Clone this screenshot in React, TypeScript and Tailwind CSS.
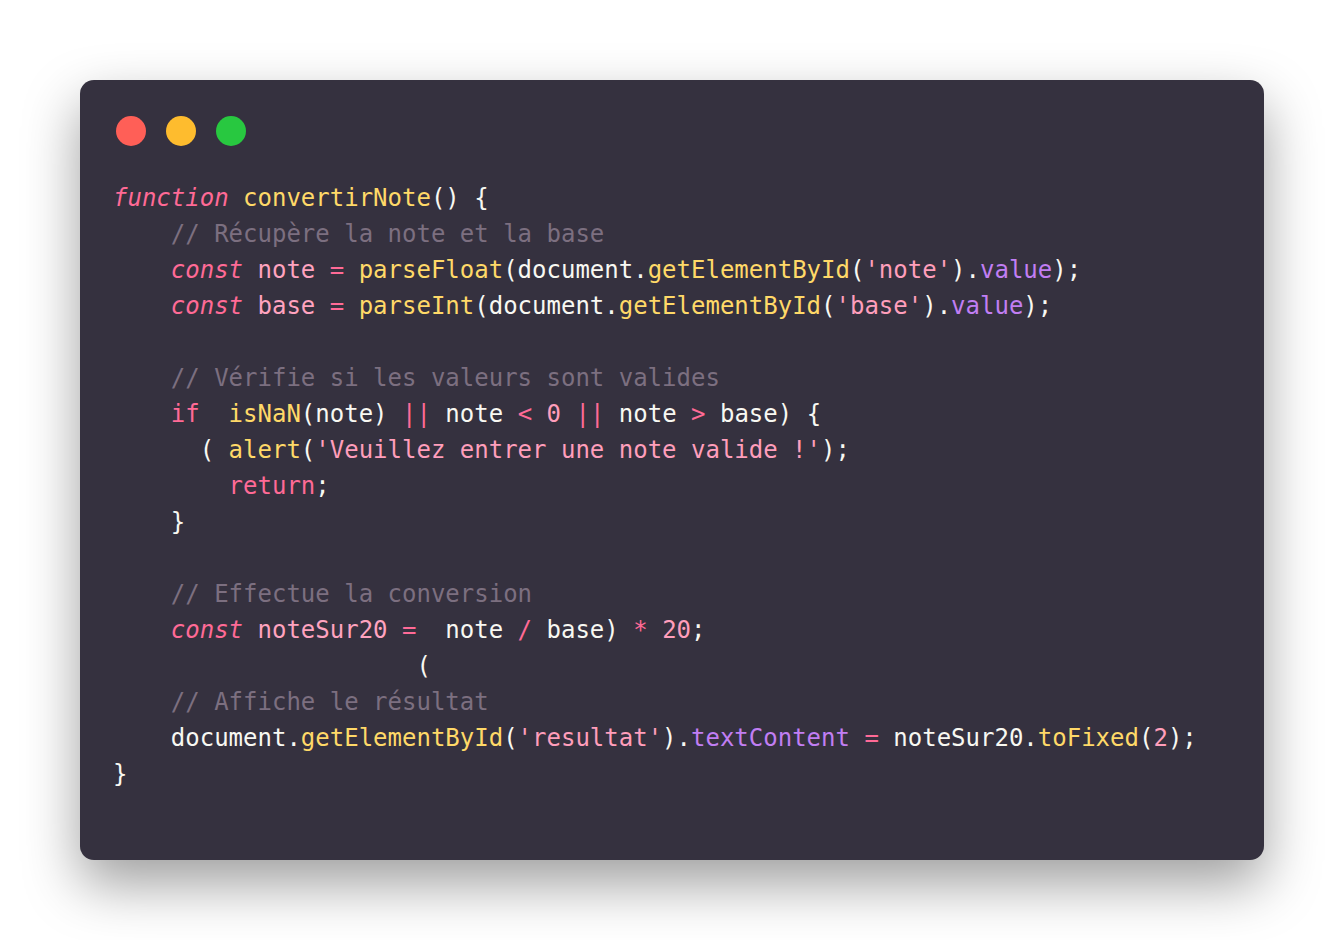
const C = {
  kw: 'text-[#ff6a96] italic',
  ctl: 'text-[#ff6a96]',
  fn: 'text-[#ffd968]',
  str: 'text-[#ff9ebb]',
  prop: 'text-[#c17ef3]',
  cm: 'text-[#7c6f80]',
  op: 'text-[#ff6a96]',
  vr: 'text-[#ffa3bf]',
  num: 'text-[#ff9ebb]',
  tx: 'text-[#f8f8f2]',
};

type Tok = [string, string?];

const lines: Tok[][] = [
  [['function', C.kw], [' '], ['convertirNote', C.fn], ['() {']],
  [['    '], ['// Récupère la note et la base', C.cm]],
  [['    '], ['const', C.kw], [' '], ['note', C.vr], [' '], ['=', C.op], [' '], ['parseFloat', C.fn], ['(document.'], ['getElementById', C.fn], ['('], ["'note'", C.str], [').'], ['value', C.prop], [');']],
  [['    '], ['const', C.kw], [' '], ['base', C.vr], [' '], ['=', C.op], [' '], ['parseInt', C.fn], ['(document.'], ['getElementById', C.fn], ['('], ["'base'", C.str], [').'], ['value', C.prop], [');']],
  [[' ']],
  [['    '], ['// Vérifie si les valeurs sont valides', C.cm]],
  [['    '], ['if', C.ctl], ['  '], ['isNaN', C.fn], ['(note) '], ['||', C.op], [' note '], ['<', C.op], [' '], ['0', C.num], [' '], ['||', C.op], [' note '], ['>', C.op], [' base) {']],
  [['      ( '], ['alert', C.fn], ['('], ["'Veuillez entrer une note valide !'", C.str], [');']],
  [['        '], ['return', C.ctl], [';']],
  [['    }']],
  [[' ']],
  [['    '], ['// Effectue la conversion', C.cm]],
  [['    '], ['const', C.kw], [' '], ['noteSur20', C.vr], [' '], ['=', C.op], ['  note '], ['/', C.op], [' base) '], ['*', C.op], [' '], ['20', C.num], [';']],
  [['                     (']],
  [['    '], ['// Affiche le résultat', C.cm]],
  [['    document.'], ['getElementById', C.fn], ['('], ["'resultat'", C.str], [').'], ['textContent', C.prop], [' '], ['=', C.op], [' noteSur20.'], ['toFixed', C.fn], ['('], ['2', C.num], [');']],
  [['}']],
];

export default function App() {
  return (
    <div className="min-h-[940px] w-full bg-white p-20">
      <div className="h-[780px] w-[1184px] rounded-[14px] bg-[#35313f] shadow-[0_24px_55px_rgba(0,0,0,0.38)]">
        <div className="flex gap-5 pl-9 pt-9">
          <span className="h-[30px] w-[30px] rounded-full bg-[#ff5f57]" />
          <span className="h-[30px] w-[30px] rounded-full bg-[#febc2e]" />
          <span className="h-[30px] w-[30px] rounded-full bg-[#28c840]" />
        </div>
        <pre className="mt-[34px] pl-[33px] font-['DejaVu_Sans_Mono',monospace] text-[24px] leading-[36px] text-[#f8f8f2]">
          {lines.map((line, i) => (
            <div key={i} className="whitespace-pre">
              {line.map(([t, cls], j) => (
                <span key={j} className={cls ?? C.tx}>
                  {t}
                </span>
              ))}
            </div>
          ))}
        </pre>
      </div>
    </div>
  );
}
